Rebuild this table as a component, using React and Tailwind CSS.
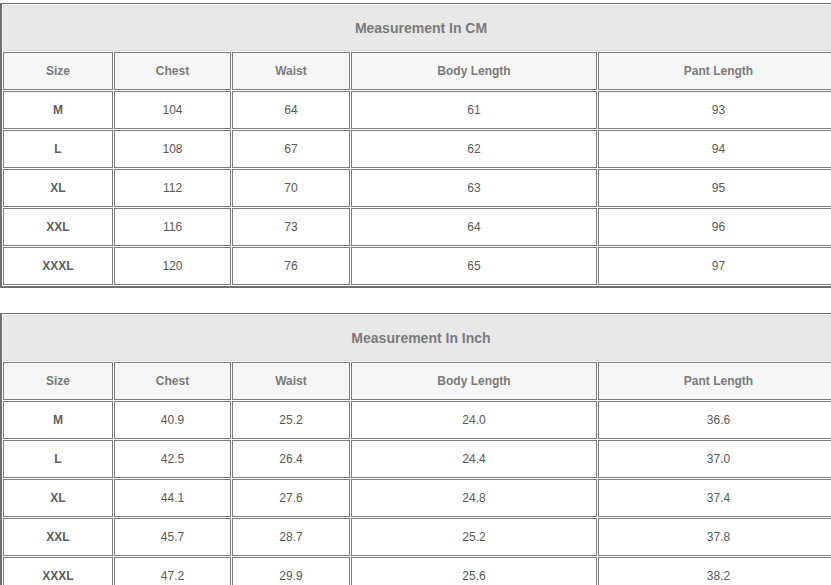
import React from 'react';

const columns = [
  { label: 'Size', width: 'w-[110px]' },
  { label: 'Chest', width: 'w-[117px]' },
  { label: 'Waist', width: 'w-[118px]' },
  { label: 'Body Length', width: 'w-[246px]' },
  { label: 'Pant Length', width: 'w-[241px]' },
];

const cmRows = [
  ['M', '104', '64', '61', '93'],
  ['L', '108', '67', '62', '94'],
  ['XL', '112', '70', '63', '95'],
  ['XXL', '116', '73', '64', '96'],
  ['XXXL', '120', '76', '65', '97'],
];

const inchRows = [
  ['M', '40.9', '25.2', '24.0', '36.6'],
  ['L', '42.5', '26.4', '24.4', '37.0'],
  ['XL', '44.1', '27.6', '24.8', '37.4'],
  ['XXL', '45.7', '28.7', '25.2', '37.8'],
  ['XXXL', '47.2', '29.9', '25.6', '38.2'],
];

const SizeTable = ({ title, rows, className = '' }) => (
  <table
    className={`w-[842px] max-w-none table-fixed border-separate border-spacing-px border-t border-l-2 border-r-2 border-b-2 border-[#6f6f6f] bg-white text-[12px] ${className}`}
    style={{ fontFamily: '"Liberation Sans", Arial, sans-serif' }}
  >
    <colgroup>
      {columns.map((col) => (
        <col key={col.label} className={col.width} />
      ))}
    </colgroup>
    <thead>
      <tr>
        <th
          colSpan={5}
          className="h-[46px] border border-[#dedede] bg-[#e8e8e8] text-center text-[14px] font-bold text-[#7a7a7a]"
        >
          {title}
        </th>
      </tr>
      <tr>
        {columns.map((col) => (
          <th
            key={col.label}
            className="h-[38px] border border-[#7d7d7d] bg-[#f6f6f6] text-center font-bold text-[#7a7a7a]"
          >
            {col.label}
          </th>
        ))}
      </tr>
    </thead>
    <tbody>
      {rows.map((row) => (
        <tr key={row[0]}>
          {row.map((val, i) => (
            <td
              key={i}
              className={`h-[38px] border border-[#7d7d7d] text-center ${
                i === 0 ? 'font-bold text-[#5f5f5f]' : 'text-[#5a5a5a]'
              }`}
            >
              {val}
            </td>
          ))}
        </tr>
      ))}
    </tbody>
  </table>
);

export default function App() {
  return (
    <div className="h-[585px] w-[831px] overflow-hidden bg-white pt-[3px]">
      <SizeTable title="Measurement In CM" rows={cmRows} />
      <SizeTable title="Measurement In Inch" rows={inchRows} className="mt-[25px]" />
    </div>
  );
}
